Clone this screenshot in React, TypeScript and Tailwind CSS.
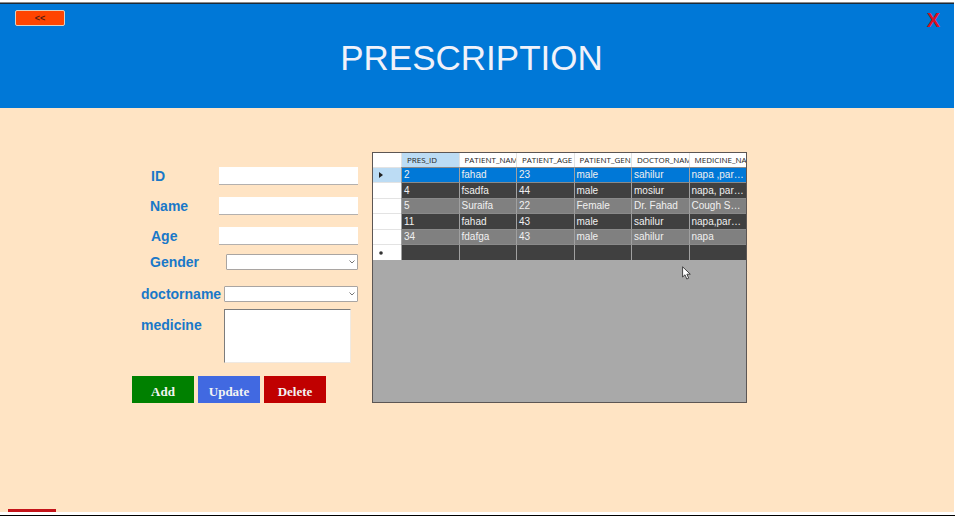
import { useState } from "react";
import type { ReactNode } from "react";

const columns = ["PRES_ID", "PATIENT_NAME", "PATIENT_AGE", "PATIENT_GENDER", "DOCTOR_NAME", "MEDICINE_NAME"];

const records = [
  ["2", "fahad", "23", "male", "sahilur", "napa ,paracetamol"],
  ["4", "fsadfa", "44", "male", "mosiur", "napa, paracetamol"],
  ["5", "Suraifa", "22", "Female", "Dr. Fahad", "Cough Syrup"],
  ["11", "fahad", "43", "male", "sahilur", "napa,paracetamol"],
  ["34", "fdafga", "43", "male", "sahilur", "napa"],
  ["", "", "", "", "", ""],
];

const inputStyle =
  "h-[18px] w-[139px] border-b border-[#b3b0ae] bg-white px-1 text-[11px] outline-none";

function Field({ id, label, indent, children }: { id: string; label: string; indent: string; children: ReactNode }) {
  return (
    <div className={`flex justify-between ${indent}`}>
      <label htmlFor={id} className="-my-1 self-center text-sm leading-5 font-bold text-[#1a78c8]">
        {label}
      </label>
      {children}
    </div>
  );
}

function Dropdown({ id, width, options }: { id: string; width: string; options: string[] }) {
  return (
    <div className={`relative ${width}`}>
      <select
        id={id}
        defaultValue=""
        className="block h-4 w-full appearance-none rounded-[1px] border border-[#a9a5a2] bg-white px-1 text-[10px] leading-3"
      >
        <option value=""></option>
        {options.map((option) => (
          <option key={option}>{option}</option>
        ))}
      </select>
      <svg viewBox="0 0 6 4" className="pointer-events-none absolute top-1.5 right-[3px] h-1 w-1.5" fill="none" stroke="#777" aria-hidden="true">
        <path d="M0.5 0.5 L3 3 L5.5 0.5" />
      </svg>
    </div>
  );
}

function rowColour(index: number, selected: number) {
  if (index === selected) return "bg-[#0078d7]";
  return index % 2 === 0 ? "bg-[#808080]" : "bg-[#404040]";
}

function RecordGrid() {
  const [selected, setSelected] = useState(0);
  return (
    <section className="relative min-w-0 flex-1 border border-[#5c5654] bg-[#a9a9a9]">
      <table className="w-full table-fixed border-separate border-spacing-0 text-left">
        <thead>
          <tr className="bg-white font-['Open_Sans',sans-serif] text-[8px] leading-[14px] text-[#222]">
            <th className="w-7 p-0" aria-label="Row"></th>
            {columns.map((name, i) => (
              <th
                key={name}
                className={`overflow-hidden border-l border-[#e3e3e3] p-0 pl-[5px] font-normal whitespace-nowrap ${i === 0 ? "bg-[#bcdcf4]" : ""}`}
              >
                {name}
              </th>
            ))}
          </tr>
        </thead>
        <tbody>
          {records.map((record, r) => (
            <tr
              key={r}
              onClick={() => setSelected(r)}
              className={`h-[15px] text-[10px] leading-[14px] text-[#f0f0f0] even:h-4 ${rowColour(r, selected)}`}
            >
              <th className={`border-t border-[#e3e3e3] p-0 align-middle ${r === selected ? "bg-[#bcdcf4]" : "bg-white"}`}>
                {r === selected && (
                  <svg viewBox="0 0 4 6" className="ml-1.5 block h-1.5 w-1" fill="#222" aria-hidden="true">
                    <path d="M0 0 L4 3 L0 6 Z" />
                  </svg>
                )}
                {r === records.length - 1 && (
                  <svg viewBox="0 0 4 4" className="ml-1.5 block size-1" fill="#333" aria-hidden="true">
                    <circle cx="2" cy="2" r="1.8" />
                  </svg>
                )}
              </th>
              {record.map((value, c) => (
                <td key={c} className="truncate border-t border-l border-t-[#8a8a8a] border-l-[#a0a0a0] p-0 px-0.5 align-bottom">
                  {value}
                </td>
              ))}
            </tr>
          ))}
        </tbody>
      </table>
      <svg viewBox="0 0 10 14" className="pointer-events-none absolute top-[113px] left-[309px] h-3.5 w-2.5" fill="white" stroke="#333" strokeWidth="0.9" aria-hidden="true">
        <path d="M0.6 0.8 V11 L3 8.8 L4.8 13 L6.7 12.2 L4.9 8.2 H8.3 Z" />
      </svg>
    </section>
  );
}

const actionStyle =
  "h-[27px] flex-1 pt-1 font-['Liberation_Serif',serif] text-[13px] leading-4 font-bold text-[#f3f3f3]";

export default function App() {
  return (
    <div className="flex min-h-screen flex-col border-b border-black bg-white pt-0.5 pb-[3px] font-['Liberation_Sans',Arial,sans-serif]">
      <div className="mr-px flex flex-1 flex-col border-t border-[#8a8a8a] bg-[#ffe4c4]">
        <header className="flex h-[105px] items-start justify-between border-t border-[#1b2a38] bg-[#0078d7] pr-3.5 pl-[15px]">
          <button
            type="button"
            aria-label="Back"
            className="mt-1.5 h-4 w-[50px] rounded-xs border border-[#d9d2c4] bg-[#ff4500] text-[9px] leading-3 font-bold text-[#5a1c10]"
          >
            &lt;&lt;
          </button>
          <h1 className="mt-[34px] text-[35px] leading-10 text-[#f0f2fa]">PRESCRIPTION</h1>
          <div className="flex w-[62px] justify-end">
            <button type="button" aria-label="Close" className="mt-1 text-[20px] leading-6 font-bold text-[#dc1024]">
              X
            </button>
          </div>
        </header>

        <main className="flex flex-1 flex-col justify-between">
          <div className="mt-11 flex pr-[207px] pl-[132px]">
            <form className="mr-3.5 w-[226px] shrink-0 pt-[15px]" onSubmit={(e) => e.preventDefault()}>
              <div className="flex flex-col gap-3">
                <Field id="pres-id" label="ID" indent="pl-[19px]">
                  <input id="pres-id" className={inputStyle} />
                </Field>
                <Field id="name" label="Name" indent="pl-[18px]">
                  <input id="name" className={inputStyle} />
                </Field>
                <Field id="age" label="Age" indent="pl-[19px]">
                  <input id="age" className={inputStyle} />
                </Field>
              </div>
              <div className="mt-[9px] flex flex-col gap-4">
                <Field id="gender" label="Gender" indent="pl-[18px]">
                  <Dropdown id="gender" width="w-[132px]" options={["male", "Female"]} />
                </Field>
                <Field id="doctor" label="doctorname" indent="pl-[9px]">
                  <Dropdown id="doctor" width="w-[134px]" options={["sahilur", "mosiur", "Dr. Fahad"]} />
                </Field>
              </div>
              <div className="mt-[7px] flex justify-between pr-[7px] pl-[9px]">
                <label htmlFor="medicine" className="mt-1.5 text-sm leading-5 font-bold text-[#1a78c8]">
                  medicine
                </label>
                <textarea
                  id="medicine"
                  className="block h-[54px] w-[127px] resize-none border border-t-[#7c7c7c] border-r-[#efe9e2] border-b-[#efe9e2] border-l-[#7c7c7c] bg-white px-1 text-[11px] outline-none"
                />
              </div>
              <div className="mt-[13px] mr-8 flex gap-1">
                <button type="submit" className={`${actionStyle} bg-[#008000]`}>Add</button>
                <button type="button" className={`${actionStyle} bg-[#4169e1]`}>Update</button>
                <button type="button" className={`${actionStyle} bg-[#c00000]`}>Delete</button>
              </div>
            </form>
            <RecordGrid />
          </div>
          <div className="ml-2 h-[3px] w-12 bg-[#c4141a]" />
        </main>
      </div>
    </div>
  );
}
